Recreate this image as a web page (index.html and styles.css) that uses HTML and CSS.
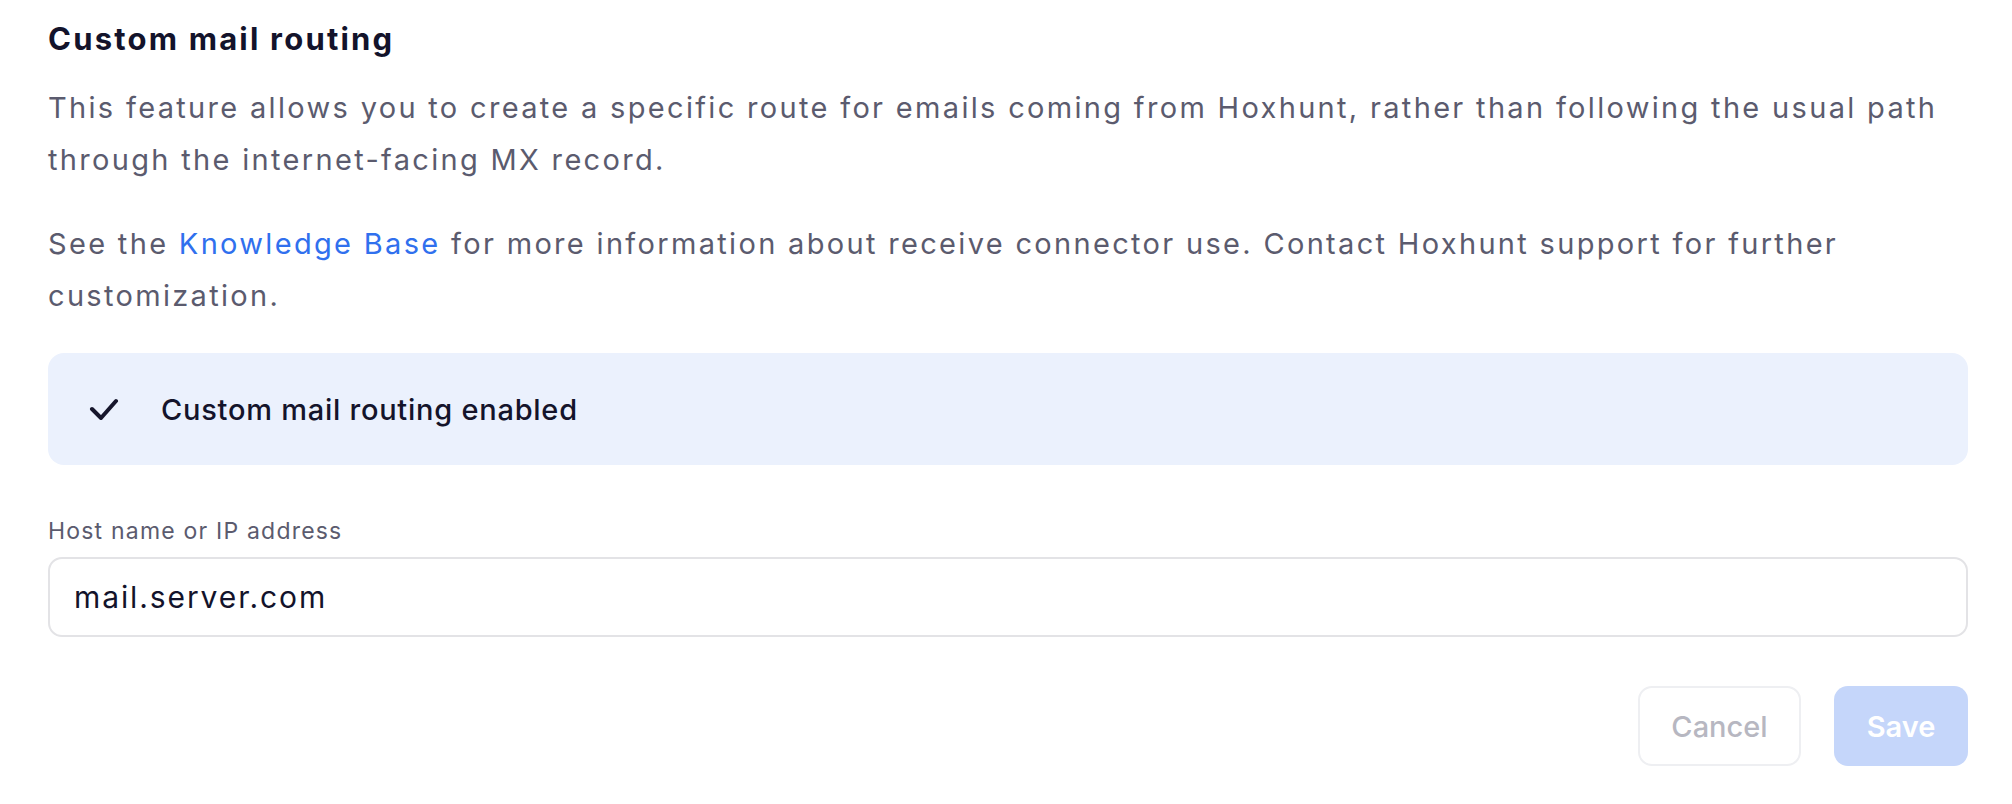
FILE: index.html
```html
<!DOCTYPE html>
<html lang="en">
<head>
<meta charset="utf-8">
<title>Custom mail routing</title>
<link rel="stylesheet" href="styles.css">
</head>
<body>
<main class="page">
  <section class="section">
    <h2 class="title">Custom mail routing</h2>
    <p class="text">This feature allows you to create a specific route for emails coming from Hoxhunt, rather than following the usual path through the internet-facing MX record.</p>
    <p class="text">See the <a class="link" href="#">Knowledge Base</a> for more information about receive connector use. Contact Hoxhunt support for further customization.</p>
    <div class="banner">
      <svg class="check" width="30" height="22" viewBox="0 0 30 22" aria-hidden="true">
        <path d="M3 11 L12 20 L27 3" fill="none" stroke="#16162c" stroke-width="4" stroke-linecap="round" stroke-linejoin="round"/>
      </svg>
      <span class="banner-text">Custom mail routing enabled</span>
    </div>
    <label class="field">
      <span class="field-label">Host name or IP address</span>
      <input class="field-input" type="text" value="mail.server.com">
    </label>
    <div class="actions">
      <button class="btn btn-cancel" type="button">Cancel</button>
      <button class="btn btn-save" type="button">Save</button>
    </div>
  </section>
</main>
</body>
</html>
```
FILE: styles.css
```css
* { box-sizing: border-box; }
html, body { margin: 0; padding: 0; background: #ffffff; }
body { font-family: Inter, "Open Sans", sans-serif; }

.page { padding: 19px 44px 0 48px; }
.section { width: 1920px; display: flex; flex-direction: column; }

.title {
  margin: 0;
  font-size: 31px;
  line-height: 40px;
  font-weight: 700;
  letter-spacing: 2.2px;
  color: #13132b;
}

.text {
  margin: 0;
  font-size: 29px;
  line-height: 52px;
  font-weight: 400;
  letter-spacing: 2.32px;
  color: #5b5b6e;
}
.title + .text { margin-top: 23px; }
.text + .text { margin-top: 32px; }

.link { color: #3070ee; text-decoration: none; }

.banner {
  margin-top: 31px;
  height: 112px;
  background: #ebf1fd;
  border-radius: 16px;
  display: flex;
  align-items: center;
  padding-left: 41px;
  gap: 42px;
}
.check { display: block; flex: none; }
.banner-text {
  font-size: 29px;
  font-weight: 500;
  letter-spacing: 0.75px;
  color: #14142b;
}

.field { margin-top: 50px; display: flex; flex-direction: column; gap: 10px; }
.field-label {
  font-size: 23px;
  line-height: 32px;
  color: #5b5b6e;
  letter-spacing: 1.2px;
}
.field-input {
  height: 80px;
  border: 2px solid #e3e3e6;
  border-radius: 14px;
  padding: 0 24px;
  font-family: Inter, "Open Sans", sans-serif;
  font-size: 30px;
  letter-spacing: 1.9px;
  color: #13132b;
  background: #ffffff;
  outline: none;
}

.actions {
  margin-top: 49px;
  display: flex;
  justify-content: flex-end;
  gap: 33px;
}
.btn {
  height: 80px;
  border-radius: 14px;
  font-family: Inter, "Open Sans", sans-serif;
  font-size: 29px;
  letter-spacing: 0;
  cursor: default;
}
.btn-cancel {
  width: 163px;
  background: #ffffff;
  border: 2px solid #eeeff2;
  color: #b7b7c1;
  font-weight: 500;
}
.btn-save {
  width: 134px;
  background: #c5d6fa;
  border: none;
  color: #ffffff;
  font-weight: 600;
}
```
